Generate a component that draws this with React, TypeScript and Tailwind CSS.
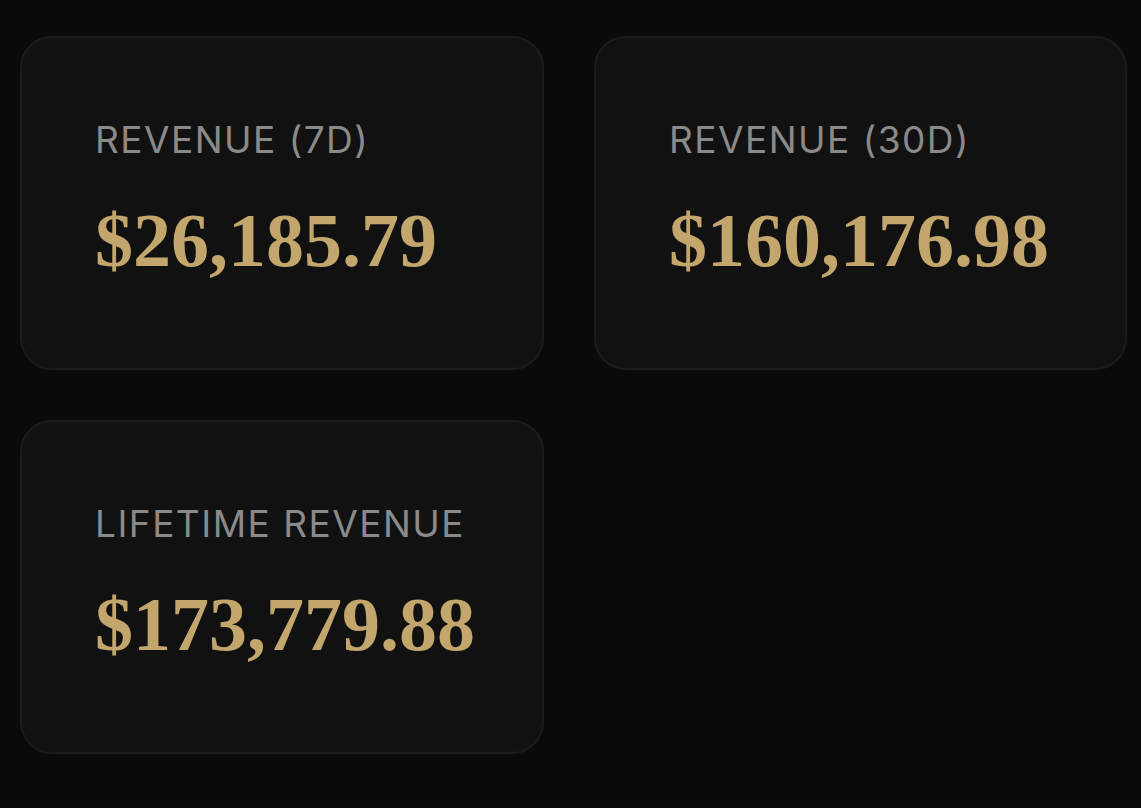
import React from 'react';

type Stat = { label: string; value: string };

const stats: Stat[] = [
  { label: 'Revenue (7D)', value: '$26,185.79' },
  { label: 'Revenue (30D)', value: '$160,176.98' },
  { label: 'Lifetime Revenue', value: '$173,779.88' },
];

const StatCard: React.FC<Stat> = ({ label, value }) => (
  <div className="h-[334px] rounded-[32px] border-2 border-[#1c1c1c] bg-[#111111] pl-[73px] pt-[83px]">
    <p className="font-['Inter',sans-serif] text-[37px] leading-none uppercase tracking-[0.04em] text-[#8a8a8a]">
      {label}
    </p>
    <p className="mt-[44px] font-['Liberation_Serif',serif] text-[76px] font-bold leading-none text-[#c3a66b]">
      {value}
    </p>
  </div>
);

export default function App() {
  return (
    <div className="min-h-screen bg-[#0a0a0a] pl-[20px] pt-[36px]">
      <div className="grid grid-cols-[524px_533px] gap-x-[50px] gap-y-[50px]">
        {stats.map((s) => (
          <StatCard key={s.label} {...s} />
        ))}
      </div>
    </div>
  );
}
